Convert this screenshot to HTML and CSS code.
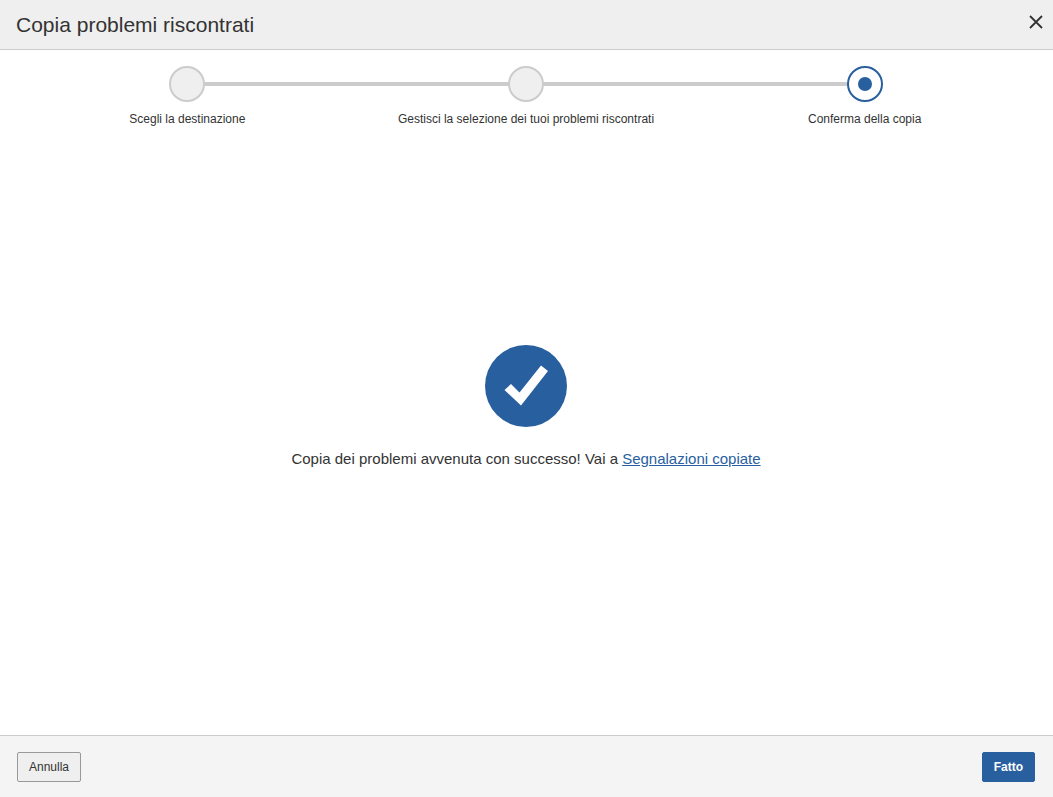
FILE: index.html
```html
<!DOCTYPE html>
<html lang="it">
<head>
    <meta charset="UTF-8">
    <meta name="viewport" content="width=device-width, initial-scale=1.0">
    <title>Copia problemi riscontrati</title>
    <link rel="stylesheet" href="styles.css">
</head>
<body>
    <header class="header">
        <h1>Copia problemi riscontrati</h1>
        <button type="button" class="close" aria-label="Chiudi">
            <svg width="14" height="14" viewBox="0 0 14 14" fill="none" stroke="#333" stroke-width="1.800">
                <path d="M1 1L13 13M13 1L1 13"/>
            </svg>
        </button>
    </header>

    <ol class="steps">
        <li class="step">
            <span class="circle"></span>
            <span class="label">Scegli la destinazione</span>
        </li>
        <li class="step">
            <span class="circle"></span>
            <span class="label">Gestisci la selezione dei tuoi problemi riscontrati</span>
        </li>
        <li class="step active" aria-current="step">
            <span class="circle"></span>
            <span class="label">Conferma della copia</span>
        </li>
    </ol>

    <main class="content">
        <svg class="check" width="82" height="82" viewBox="0 0 82 82">
            <circle cx="41" cy="41" r="41" fill="#285f9f"/>
            <path d="M19.5 45L26 39L34.500 47.500L56 20.500L63 26L36 60.500Z" fill="#fff"/>
        </svg>
        <p class="message">Copia dei problemi avvenuta con successo! Vai a <a href="#">Segnalazioni copiate</a></p>
    </main>

    <footer class="footer">
        <button type="button" class="btn">Annulla</button>
        <button type="button" class="btn primary">Fatto</button>
    </footer>
</body>
</html>
```

FILE: styles.css
```css
* {
    box-sizing: border-box;
}
body {
    margin: 0;
    min-height: 100vh;
    display: flex;
    flex-direction: column;
    font-family: "Liberation Sans", Arial, sans-serif;
    font-size: 12px;
    color: #333;
    background: #fff;
}
.header {
    display: flex;
    justify-content: space-between;
    align-items: flex-start;
    padding: 13px 8px 12px 16px;
    background: #efefef;
    border-bottom: 1px solid #ccc;
}
.header h1 {
    margin: 0;
    font-size: 21px;
    font-weight: normal;
    line-height: 24px;
}
.close {
    display: flex;
    padding: 2px;
    border: none;
    background: none;
    cursor: pointer;
}

/* Wizard steps */
.steps {
    display: flex;
    margin: 0;
    padding: 16px 19px 0 18px;
    list-style: none;
}
.step {
    flex: 1;
    display: flex;
    flex-direction: column;
    align-items: center;
    gap: 9px;
    position: relative;
}
/* line to the previous step, behind the circles */
.step + .step::before {
    content: "";
    position: absolute;
    top: 16px;
    right: 50%;
    width: 100%;
    height: 4px;
    background: #ccc;
    z-index: -1;
}
.circle {
    display: flex;
    align-items: center;
    justify-content: center;
    width: 36px;
    height: 36px;
    border: 2px solid #ccc;
    border-radius: 50%;
    background: #efefef;
}
.active .circle {
    border-color: #285f9f;
    background: #fff;
}
.active .circle::after {
    content: "";
    width: 14px;
    height: 14px;
    border-radius: 50%;
    background: #285f9f;
}
.label {
    line-height: 16px;
    text-align: center;
}

.content {
    flex: 1;
    display: flex;
    flex-direction: column;
    align-items: center;
    justify-content: center;
    gap: 22px;
    padding: 0 17px 48px 16px;
}
.message {
    margin: 0;
    font-size: 15px;
    line-height: 20px;
}
.message a {
    color: #285f9f;
}

.footer {
    display: flex;
    justify-content: space-between;
    padding: 16px 18px 15px 17px;
    background: #f4f4f4;
    border-top: 1px solid #ccc;
}
.btn {
    height: 30px;
    padding: 0 11px;
    border: 1px solid #999;
    border-radius: 2px;
    background: #efefef;
    color: #333;
    font-family: inherit;
    font-size: 12px;
    cursor: pointer;
}
.btn.primary {
    border-color: #285f9f;
    background: #285f9f;
    color: #fff;
    font-weight: bold;
}
```
